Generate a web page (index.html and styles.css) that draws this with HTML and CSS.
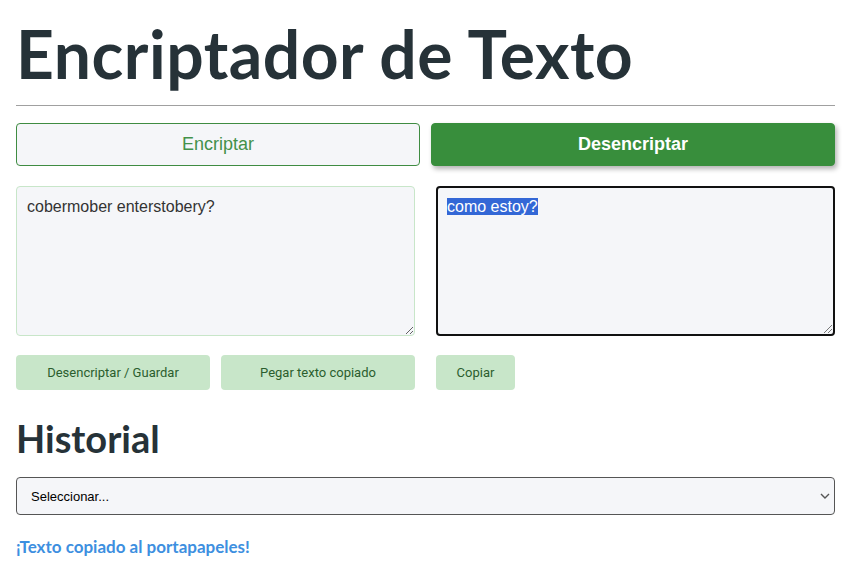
FILE: index.html
```
<!DOCTYPE html>
<html lang="es">
<head>
<meta charset="utf-8">
<title>Encriptador de Texto</title>
<link rel="stylesheet" href="styles.css">
</head>
<body>
<main class="page">
  <h1 class="title">Encriptador de Texto</h1>
  <hr class="rule">
  <div class="modes">
    <button class="mode mode-off">Encriptar</button>
    <button class="mode mode-on">Desencriptar</button>
  </div>
  <div class="panels">
    <div class="panel">
      <textarea class="box box-in">cobermober enterstobery?</textarea>
      <div class="actions">
        <button class="act act-wide">Desencriptar / Guardar</button>
        <button class="act act-wide">Pegar texto copiado</button>
      </div>
    </div>
    <div class="panel">
      <div class="box box-out"><span class="sel">como estoy?</span><span class="grip"></span></div>
      <div class="actions">
        <button class="act act-copy">Copiar</button>
      </div>
    </div>
  </div>
  <h2 class="sub">Historial</h2>
  <div class="select-wrap">
    <select class="history"><option>Seleccionar...</option></select>
    <svg class="chev" width="10" height="6" viewBox="0 0 10 6"><path d="M1 1 L5 5 L9 1" fill="none" stroke="#555" stroke-width="1.4"/></svg>
  </div>
  <p class="msg">¡Texto copiado al portapapeles!</p>
</main>
</body>
</html>
```
FILE: styles.css
```
html, body { margin: 0; padding: 0; background: #ffffff; }
.page {
  width: 819px;
  margin-left: 16px;
  padding-top: 14px;
  font-family: "Liberation Sans", Arial, sans-serif;
}
.title {
  margin: 0;
  font-family: Lato, "Noto Sans", sans-serif;
  font-weight: 700;
  font-size: 66px;
  line-height: 80px;
  color: #263238;
  letter-spacing: 0.5px;
}
.rule {
  margin: 11px 0 0 0;
  border: 0;
  border-top: 1px solid #a0a0a0;
  height: 0;
}
.modes {
  display: flex;
  gap: 11px;
  margin-top: 17px;
}
.mode {
  flex: 1;
  height: 43px;
  border-radius: 4px;
  font-family: "Liberation Sans", Arial, sans-serif;
  font-size: 18px;
  cursor: pointer;
}
.mode-off {
  background: #f5f6f9;
  border: 1px solid #3f8c42;
  color: #43914a;
}
.mode-on {
  background: #388e3c;
  border: 1px solid #388e3c;
  color: #ffffff;
  font-weight: 700;
  box-shadow: 2px 3px 5px rgba(0,0,0,0.3);
}
.panels {
  display: flex;
  gap: 21px;
  margin-top: 20px;
}
.panel { width: 399px; }
.box {
  display: block;
  box-sizing: border-box;
  width: 399px;
  height: 150px;
  margin: 0;
  border-radius: 4px;
  background: #f5f6f9;
  font-family: "Liberation Sans", Arial, sans-serif;
  font-size: 16px;
  line-height: 20px;
  color: #333333;
}
.box-in {
  border: 1px solid #c8e6c9;
  padding: 10px 10px;
  resize: vertical;
  outline: none;
}
.box-out {
  position: relative;
  border: 2px solid #111111;
  padding: 9px 9px;
}
.sel {
  background: #3367d6;
  color: #ffffff;
}
.grip {
  position: absolute;
  right: 1px;
  bottom: 1px;
  width: 8px;
  height: 8px;
  background: linear-gradient(135deg, transparent 45%, #777 45%, #777 55%, transparent 55%, transparent 70%, #777 70%, #777 80%, transparent 80%);
}
.actions {
  display: flex;
  gap: 11px;
  margin-top: 19px;
}
.act {
  height: 35px;
  border: 0;
  border-radius: 4px;
  background: #c8e6c9;
  color: #2b5e2e;
  font-family: Roboto, "Liberation Sans", sans-serif;
  font-size: 13px;
  cursor: pointer;
}
.act-wide { width: 194px; }
.act-copy { width: 79px; }
.sub {
  margin: 25px 0 0 0;
  font-family: Lato, "Noto Sans", sans-serif;
  font-weight: 700;
  font-size: 38px;
  line-height: 46px;
  color: #263238;
}
.select-wrap { margin-top: 16px; position: relative; }
.history {
  display: block;
  width: 819px;
  height: 38px;
  box-sizing: border-box;
  border: 1px solid #555555;
  border-radius: 4px;
  background: #f5f6f9;
  padding: 0 14px;
  font-family: "Liberation Sans", Arial, sans-serif;
  font-size: 13px;
  color: #000000;
  appearance: none;
  -webkit-appearance: none;
}
.chev {
  position: absolute;
  right: 5px;
  top: 16px;
  pointer-events: none;
}
.msg {
  margin: 21px 0 0 0;
  font-family: Lato, "Noto Sans", sans-serif;
  font-weight: 700;
  font-size: 17px;
  color: #3d8fe0;
}
```
